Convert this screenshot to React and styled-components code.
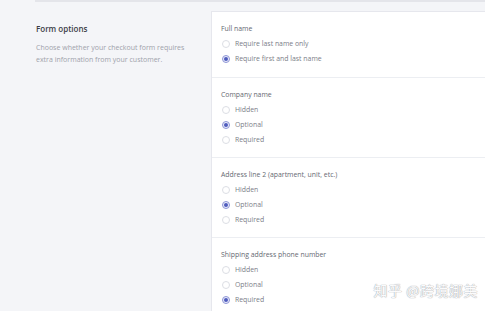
import React from 'react';
import styled, { createGlobalStyle } from 'styled-components';

const GlobalStyle = createGlobalStyle`
  html, body {
    margin: 0;
    padding: 0;
    background: #f4f5f8;
    overflow: hidden;
  }
  body {
    font-family: "Open Sans", "Noto Sans", sans-serif;
    width: 485px;
    height: 311px;
  }
`

const Page = styled.div`
  padding-left: 35px;
  height: 311px;
  position: relative;
`

const Section = styled.div`
  border-top: 2px solid #e4e5ea;
  padding-top: 10px;
  display: grid;
  grid-template-columns: 177px 1fr;
`

const Aside = styled.div`
  padding: 11px 0 0 1px;
`

const Title = styled.h2`
  margin: 0;
  font-size: 8px;
  line-height: 12px;
  font-weight: 600;
  color: #3b3d46;
`

const Lead = styled.p`
  margin: 7px 0 0;
  font-size: 7px;
  line-height: 12px;
  color: #a0a2ab;
  width: 165px;
`

const Card = styled.div`
  background: #fff;
  box-shadow: 0 0 0 1px rgba(220, 222, 230, 0.6);
`

const Group = styled.div`
  padding: 9px 0 ${props => (props.first ? '11px' : '10px')} 9px;
  border-top: ${props => (props.first ? 'none' : '1px solid #eceef2')};
`

const Label = styled.div`
  font-size: 6.9px;
  line-height: 15px;
  color: #666972;
`

const Option = styled.label`
  display: flex;
  align-items: center;
  gap: 5px;
  font-size: 6.9px;
  line-height: 15px;
  color: #7b7e88;
`

const Dot = styled.span`
  width: 6px;
  height: 6px;
  margin-left: 1px;
  border-radius: 50%;
  border: 1px solid ${props => (props.checked ? '#8e95d6' : '#dcdee4')};
  background: ${props => (props.checked ? '#eceefa' : '#fff')};
  display: flex;
  align-items: center;
  justify-content: center;

  &::after {
    content: '';
    width: 4px;
    height: 4px;
    border-radius: 50%;
    background: ${props => (props.checked ? '#4f5bbd' : 'transparent')};
  }
`

const Watermark = styled.div`
  position: absolute;
  right: 7px;
  bottom: 12px;
  font-family: "Noto Sans CJK SC", sans-serif;
  font-size: 14px;
  line-height: 18px;
  color: #fbfbfc;
  letter-spacing: 0.5px;
  text-shadow: 0 0 1px #a6a8ae, 0 0 1px #a6a8ae;
`

const groups = [
  { label: 'Full name', options: ['Require last name only', 'Require first and last name'], value: 1 },
  { label: 'Company name', options: ['Hidden', 'Optional', 'Required'], value: 1 },
  { label: 'Address line 2 (apartment, unit, etc.)', options: ['Hidden', 'Optional', 'Required'], value: 1 },
  { label: 'Shipping address phone number', options: ['Hidden', 'Optional', 'Required'], value: 2 },
]

export default function App() {
  return (
    <>
      <GlobalStyle />
      <Page>
        <Section>
          <Aside>
            <Title>Form options</Title>
            <Lead>Choose whether your checkout form requires extra information from your customer.</Lead>
          </Aside>
          <Card>
            {groups.map((g, i) => (
              <Group key={g.label} first={i === 0}>
                <Label>{g.label}</Label>
                {g.options.map((o, j) => (
                  <Option key={o}>
                    <Dot checked={j === g.value} />
                    {o}
                  </Option>
                ))}
              </Group>
            ))}
          </Card>
        </Section>
        <Watermark>知乎 @跨境娜美</Watermark>
      </Page>
    </>
  );
}
